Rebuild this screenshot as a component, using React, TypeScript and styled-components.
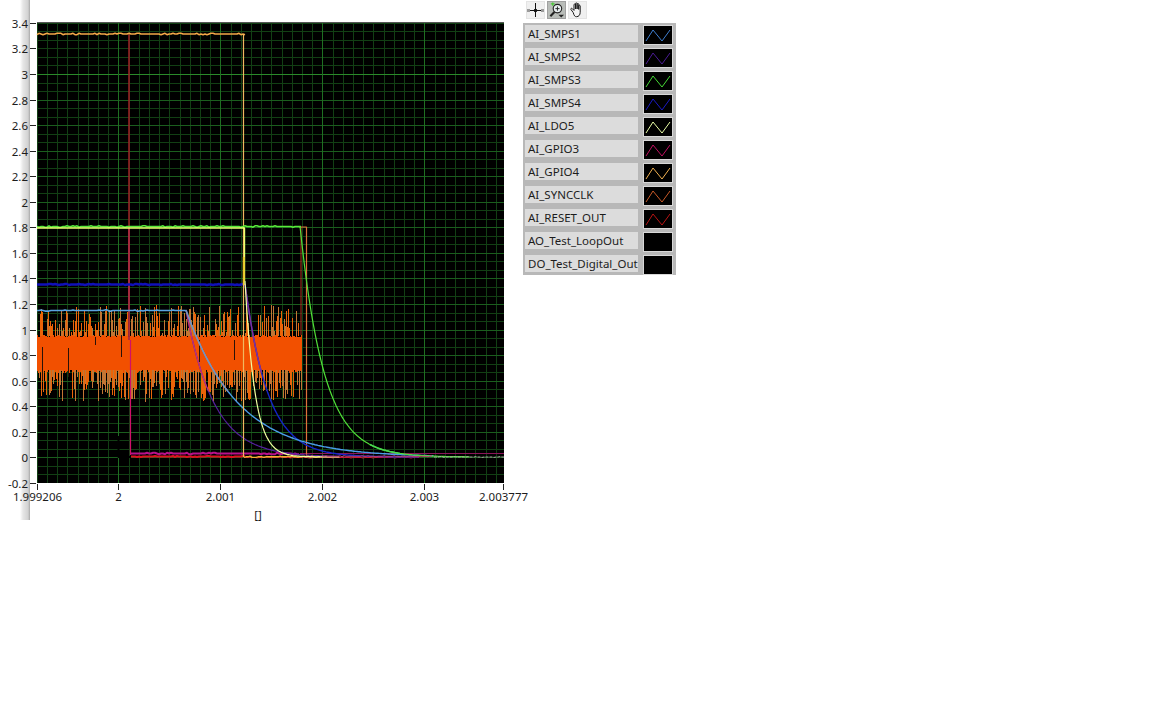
import React from "react";
import styled, { createGlobalStyle } from "styled-components";

const GlobalStyle = createGlobalStyle`
  html, body {
    margin: 0;
    background: #fff;
    font-family: "Noto Sans", Tahoma, sans-serif;
  }
`;

const Page = styled.div`
  display: flex;
  align-items: flex-start;
  width: 1152px;
  height: 720px;
  overflow: hidden;
`;

const ChartPanel = styled.div`
  width: 523px;
  height: 520px;
  flex: none;
  background: linear-gradient(90deg, #fff 0, #e6e6e6 3px, #d2d2d2 8px, #a8a8a8 10px, #fff 10px) 20px 0 / 10px 100% no-repeat;
`;

const ChartSvg = styled.svg`
  display: block;
  overflow: visible;
`;

const AxisLabel = styled.text`
  font-family: "Noto Sans", Tahoma, sans-serif;
  font-size: 11.5px;
  fill: #1c1c1c;
`;

const SidePanel = styled.div`
  display: flex;
  flex-direction: column;
  width: 153px;
  flex: none;
`;

const Toolbar = styled.div`
  display: flex;
  align-items: center;
  gap: 2px;
  height: 23px;
  padding: 0 0 3px 3px;
  box-sizing: border-box;
`;

const ToolButton = styled.div<{ $pressed?: boolean }>`
  display: flex;
  align-items: center;
  justify-content: center;
  width: 19px;
  height: 18px;
  background: ${(p) => (p.$pressed ? "#b9bdb9" : "#f0f0f0")};
  border: 1px solid ${(p) => (p.$pressed ? "#a0a0a0" : "#e4e4e4")};
  box-sizing: border-box;
`;

const Legend = styled.div`
  display: flex;
  flex-direction: column;
  gap: 6px;
  padding: 2px 2px 3px;
  background: #b8b8b8;
`;

const LegendRow = styled.div`
  display: flex;
  align-items: flex-start;
  justify-content: space-between;
  height: 17px;
`;

const LegendName = styled.div`
  width: 113px;
  height: 17px;
  padding-left: 3px;
  box-sizing: border-box;
  background: #dcdcdc;
  color: #1c1c1c;
  font-size: 11.5px;
  line-height: 17px;
  white-space: nowrap;
`;

const Swatch = styled.div`
  width: 28px;
  height: 18px;
  margin: 1px 2px 0 0;
  background: #000;
  box-shadow: 0 0 0 1px #d8d8d8;
`;

const SwatchLine = styled.svg`
  display: block;
`;

const traces = [
  { name: "AI_SMPS1", color: "#3f7fd0" },
  { name: "AI_SMPS2", color: "#4c1c96" },
  { name: "AI_SMPS3", color: "#45d835" },
  { name: "AI_SMPS4", color: "#1a1ac4" },
  { name: "AI_LDO5", color: "#eaffa8" },
  { name: "AI_GPIO3", color: "#c01060" },
  { name: "AI_GPIO4", color: "#f0b050" },
  { name: "AI_SYNCCLK", color: "#c85a28" },
  { name: "AI_RESET_OUT", color: "#b81414" },
  { name: "AO_Test_LoopOut", color: "" },
  { name: "DO_Test_Digital_Out", color: "" },
];

const PLOT = { left: 37, right: 504, top: 23, bottom: 483 };
const yOf = (v: number) => 457.4 - 127.8 * v;
const xOf = (t: number) => 118.4 + (t - 2) * 102000;

let seed = 41;
const rnd = () => {
  seed = (seed * 16807) % 2147483647;
  return seed / 2147483647;
};

const noisy = (x0: number, x1: number, y: number, amp: number) => {
  let d = "";
  for (let x = x0; x <= x1; x += 2) {
    const j = rnd() < 0.3 ? (rnd() < 0.5 ? -amp : amp) : 0;
    d += `${d ? "L" : "M"}${x} ${y + j}`;
  }
  return d;
};

// exponential fall towards the zero line
const decay = (x0: number, x1: number, amp: number, tau: number) => {
  const pts: string[] = [];
  for (let x = x0; x <= x1; x += 1.5) {
    pts.push(`${x} ${(457 - amp * Math.exp(-(x - x0) / tau)).toFixed(1)}`);
  }
  return "M" + pts.join("L");
};

const buildNoise = () => {
  let core = "";
  let tan = "";
  let bright = "";
  for (let x = 37.5; x < 302; x += 1) {
    core += `M${x} ${335 + Math.round(rnd() * 2)}V${370 + Math.round(rnd() * 3)}`;
    if (rnd() < 0.62) {
      const top = 305 + rnd() * 28;
      if (rnd() < 0.5) tan += `M${x} ${top}V336`;
      else bright += `M${x} ${top}V336`;
    }
    if (rnd() < 0.62) {
      const bottom = 376 + rnd() * 26;
      if (rnd() < 0.5) tan += `M${x} 370V${bottom}`;
      else bright += `M${x} 370V${bottom}`;
    }
  }
  return { core, tan, bright };
};

const noise = buildNoise();

const Grid = () => {
  const minorX: number[] = [];
  for (let i = -8; i < 38; i++) minorX.push(Math.round(118.4 + i * 10.2) + 0.5);
  const minorY: number[] = [];
  for (let i = 0; i < 55; i++) minorY.push(Math.round(yOf(-0.2) - (i * 127.8) / 15) + 0.5);
  const majorX = [2, 2.001, 2.002, 2.003].map((t) => Math.round(xOf(t)) + 0.5);
  const majorY = Array.from({ length: 18 }, (_, i) => Math.round(yOf(-0.2 + i * 0.2)) + 0.5);
  return (
    <g shapeRendering="crispEdges" strokeWidth={1}>
      <rect x={PLOT.left} y={PLOT.top} width={PLOT.right - PLOT.left} height={PLOT.bottom - PLOT.top} fill="#000" />
      {minorX
        .filter((x) => x > PLOT.left && x < PLOT.right)
        .map((x) => (
          <line key={x} x1={x} x2={x} y1={PLOT.top} y2={PLOT.bottom} stroke="#123f14" />
        ))}
      {minorY
        .filter((y) => y > PLOT.top && y < PLOT.bottom)
        .map((y) => (
          <line key={y} x1={PLOT.left} x2={PLOT.right} y1={y} y2={y} stroke="#123f14" />
        ))}
      {majorY.slice(1, -1).map((y, i) => (
        <line key={y} x1={PLOT.left} x2={PLOT.right} y1={y} y2={y} stroke={i === 15 ? "#2a8a2a" : "#1b5e1e"} />
      ))}
      {majorX.map((x) => (
        <line key={x} x1={x} x2={x} y1={PLOT.top} y2={PLOT.bottom} stroke="#1f6f22" />
      ))}
      <line x1={PLOT.left} x2={PLOT.right} y1={22.5} y2={22.5} stroke="#555" />
    </g>
  );
};

const Traces = () => (
  <g fill="none" strokeLinejoin="round">
    {/* test outputs are drawn in black, so they only cut the grid */}
    <path d="M118.5 436V457H131" stroke="#000" strokeWidth={2} />

    <path d="M129 34V300" stroke="#a02226" strokeWidth={1.5} />
    <path d={noise.core} stroke="#f25000" strokeWidth={1} shapeRendering="crispEdges" />
    <path d={noise.tan} stroke="#c27634" strokeWidth={1} shapeRendering="crispEdges" />
    <path d={noise.bright} stroke="#ea6408" strokeWidth={1} shapeRendering="crispEdges" />
    <path d="M42.5 347V380M68.5 348V377M95.5 337V345M121.5 335V357M199.5 340V362M234.5 340V360" stroke="#2a1208" strokeWidth={1} shapeRendering="crispEdges" />

    <path d="M129 226V340" stroke="#a82a40" strokeWidth={2} opacity={0.9} />
    <path d="M130.5 340V455" stroke="#d01068" strokeWidth={1.2} />
    <path d={noisy(131, 245, 456.5, 0.5)} stroke="#e01020" strokeWidth={2} />
    <path d={noisy(245, 420, 457.5, 0.5)} stroke="#c81838" strokeWidth={1} />
    <path d={noisy(131, 300, 453.5, 0.7)} stroke="#b8108a" strokeWidth={2} />
    <path d="M300 453.5H504" stroke="#8a1458" strokeWidth={1.2} />

    <path d="M301 227V335" stroke="#b03020" strokeWidth={1} />
    <path d="M299 227H306.5V457" stroke="#e0703a" strokeWidth={1.2} />

    <path d={decay(186, 340, 147, 28)} stroke="#54209c" strokeWidth={1.2} />
    <path d={decay(186, 209, 147, 28)} stroke="#c03078" strokeWidth={1.2} />

    <path d={noisy(37, 245, 284.5, 0.5)} stroke="#1010b8" strokeWidth={2.4} />
    <path d={decay(245, 420, 173, 23)} stroke="#1424c8" strokeWidth={1.4} />
    <path d={decay(245, 262, 173, 23)} stroke="#80309c" strokeWidth={1.4} />

    <path d={noisy(37, 187, 310.5, 0.6)} stroke="#5aa4e0" strokeWidth={1.6} />
    <path d={decay(186, 434, 147, 52)} stroke="#4a9ce8" strokeWidth={1.4} />
    <path d={decay(186, 228, 147, 52)} stroke="#7c90b8" strokeWidth={1.4} />

    <path d={noisy(37, 245, 34, 0.7)} stroke="#f4a848" strokeWidth={1.6} />
    <path d="M243.5 34V457" stroke="#f0b860" strokeWidth={1.2} />
    <path d={noisy(244, 320, 456.8, 0.6)} stroke="#f4b030" strokeWidth={1.4} />

    <path d={noisy(37, 302, 226.5, 0.7)} stroke="#58ea3a" strokeWidth={1.6} />
    <path d={decay(300, 470, 231, 24)} stroke="#50e038" strokeWidth={1.2} />
    <path d={decay(370, 400, 231 * Math.exp(-70 / 24), 24)} stroke="#48d850" strokeWidth={1.6} />

    <path d="M37 228H244.5V281" stroke="#eaff70" strokeWidth={1.4} />
    <path d="M243.8 257V285" stroke="#e8c828" strokeWidth={2} />
    <path d={decay(245, 340, 176, 10)} stroke="#f0ffa0" strokeWidth={1.2} />

    <path d={noisy(322, 432, 456.3, 0.5)} stroke="#c04070" strokeWidth={1} />
    <path d={noisy(434, 504, 457, 0.4)} stroke="#a8a8a0" strokeWidth={1} strokeDasharray="3 1" />
  </g>
);

const Axes = () => {
  const yTicks = Array.from({ length: 19 }, (_, i) => -0.2 + i * 0.2);
  const xTicks = [
    { x: 37.5, label: "1.999206" },
    { x: 118.5, label: "2" },
    { x: 220.5, label: "2.001" },
    { x: 322.5, label: "2.002" },
    { x: 424.5, label: "2.003" },
    { x: 503.5, label: "2.003777" },
  ];
  return (
    <g>
      {yTicks.map((v) => {
        const y = Math.round(yOf(v)) + 0.5;
        const label = Math.abs(v) < 0.01 ? "0" : String(Number(v.toFixed(1)));
        return (
          <g key={label}>
            <line x1={30} x2={36} y1={y} y2={y} stroke="#222" shapeRendering="crispEdges" />
            <AxisLabel x={28} y={y + 4} textAnchor="end">
              {label}
            </AxisLabel>
          </g>
        );
      })}
      {xTicks.map((t) => (
        <g key={t.label}>
          <line x1={t.x} x2={t.x} y1={484} y2={490} stroke="#222" shapeRendering="crispEdges" />
          <AxisLabel x={t.x} y={501} textAnchor="middle">
            {t.label}
          </AxisLabel>
        </g>
      ))}
      <AxisLabel x={258} y={519} textAnchor="middle">
        []
      </AxisLabel>
    </g>
  );
};

const CrosshairIcon = () => (
  <svg width="17" height="16" viewBox="0 0 17 16">
    <path d="M1 8.5H16M8.5 1V15" stroke="#111" strokeWidth="1" />
    <circle cx="8.5" cy="8.5" r="1.8" fill="#111" />
    <rect x="0" y="7" width="3" height="3" fill="#9a9a9a" />
    <rect x="14" y="7" width="3" height="3" fill="#9a9a9a" />
  </svg>
);

const ZoomIcon = () => (
  <svg width="18" height="17" viewBox="0 0 18 17">
    <path d="M3 1.5H7M5 0V3.5" stroke="#4cc83c" strokeWidth="1.4" />
    <circle cx="10" cy="6.5" r="4.5" fill="#e8eef0" stroke="#222" strokeWidth="1.2" />
    <path d="M7.8 6.5H12.2M10 4.3V8.7" stroke="#222" strokeWidth="1" />
    <path d="M6.8 10L2.5 14.5" stroke="#222" strokeWidth="2.2" />
    <path d="M11 13H17L14 16Z" fill="#222" />
  </svg>
);

const HandIcon = () => (
  <svg width="17" height="16" viewBox="0 0 17 16">
    <path
      d="M4.2 10.5L2 7.6c-.7-1 .6-1.8 1.4-.9L5 8.4V2.8c0-1.1 1.5-1.1 1.5 0V7V1.7c0-1.1 1.6-1.1 1.6 0V7V2.3c0-1.1 1.6-1.1 1.6 0V7.4V4c0-1.1 1.5-1.1 1.5 0v6.3c0 2.7-1.5 4.4-3.7 4.4c-1.5 0-2.4-.8-3.3-4.2Z"
      fill="#f4f4f4"
      stroke="#1a1a1a"
      strokeWidth="1"
    />
  </svg>
);

const App = () => (
  <Page>
    <GlobalStyle />
    <ChartPanel>
      <ChartSvg width={523} height={520} viewBox="0 0 523 520">
        <Grid />
        <Traces />
        <Axes />
      </ChartSvg>
    </ChartPanel>
    <SidePanel>
      <Toolbar>
        <ToolButton>
          <CrosshairIcon />
        </ToolButton>
        <ToolButton $pressed>
          <ZoomIcon />
        </ToolButton>
        <ToolButton>
          <HandIcon />
        </ToolButton>
      </Toolbar>
      <Legend>
        {traces.map((t) => (
          <LegendRow key={t.name}>
            <LegendName>{t.name}</LegendName>
            <Swatch>
              {t.color && (
                <SwatchLine width="28" height="18" viewBox="0 0 28 18">
                  <path d="M2 15L9 4L18 15L26 4" fill="none" stroke={t.color} strokeWidth="1" />
                </SwatchLine>
              )}
            </Swatch>
          </LegendRow>
        ))}
      </Legend>
    </SidePanel>
  </Page>
);

export default App;
